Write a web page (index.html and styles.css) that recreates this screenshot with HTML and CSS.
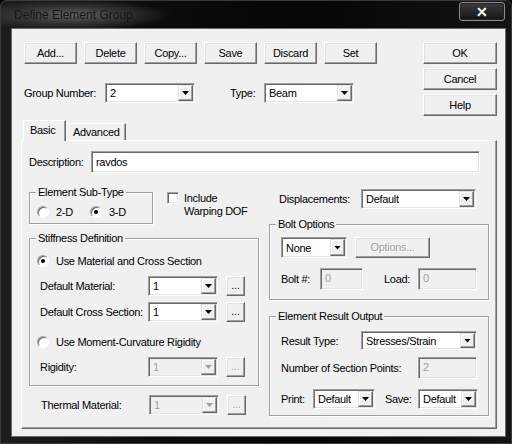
FILE: index.html
```html
<!DOCTYPE html>
<html>
<head>
<meta charset="utf-8">
<link rel="stylesheet" href="styles.css">
</head>
<body>
<div class="window">
  <div class="titlebar">
    <span class="title">Define Element Group</span>
    <div class="close">✕</div>
  </div>
  <div class="client">
    <div class="top">
      <div class="top-left">
        <div class="btnrow">
          <div class="btn">Add...</div>
          <div class="btn">Delete</div>
          <div class="btn">Copy...</div>
          <div class="btn">Save</div>
          <div class="btn">Discard</div>
          <div class="btn">Set</div>
        </div>
        <div class="grouprow">
          <span class="lbl w-gn">Group Number:</span>
          <div class="combo w90"><span class="val">2</span><span class="arrow"></span></div>
          <span class="lbl w-type">Type:</span>
          <div class="combo w90"><span class="val">Beam</span><span class="arrow"></span></div>
        </div>
      </div>
      <div class="side">
        <div class="btn wide">OK</div>
        <div class="btn wide">Cancel</div>
        <div class="btn wide">Help</div>
      </div>
    </div>
    <div class="tabs">
      <div class="tab active">Basic</div>
      <div class="tab">Advanced</div>
    </div>
    <div class="panel">
      <div class="row desc">
        <span class="lbl w-desc">Description:</span>
        <div class="input desc-in">ravdos</div>
      </div>
      <div class="cols">
        <div class="col-left">
          <div class="subrow">
            <div class="grp subtype">
              <div class="grp-title">Element Sub-Type</div>
              <div class="radios">
                <span class="opt w-2d"><span class="radio"></span>2-D</span>
                <span class="opt"><span class="radio on"></span>3-D</span>
              </div>
            </div>
            <div class="check"><span class="box"></span><span class="check-text">Include<br>Warping DOF</span></div>
          </div>
          <div class="grp stiff">
            <div class="grp-title">Stiffness Definition</div>
            <div class="opt first"><span class="radio on"></span>Use Material and Cross Section</div>
            <div class="row srow r-mat">
              <span class="lbl w-sl">Default Material:</span>
              <div class="combo w70"><span class="val">1</span><span class="arrow"></span></div>
              <div class="btn dots">...</div>
            </div>
            <div class="row srow r-cs">
              <span class="lbl w-sl">Default Cross Section:</span>
              <div class="combo w70"><span class="val">1</span><span class="arrow"></span></div>
              <div class="btn dots">...</div>
            </div>
            <div class="opt second"><span class="radio"></span>Use Moment-Curvature Rigidity</div>
            <div class="row srow r-rig">
              <span class="lbl w-sl">Rigidity:</span>
              <div class="combo w70 disabled"><span class="val">1</span><span class="arrow"></span></div>
              <div class="btn dots disabled">...</div>
            </div>
          </div>
          <div class="row thermal">
            <span class="lbl w-sl">Thermal Material:</span>
            <div class="combo w70 disabled"><span class="val">1</span><span class="arrow"></span></div>
            <div class="btn dots disabled">...</div>
          </div>
        </div>
        <div class="col-right">
          <div class="row disp">
            <span class="lbl w-disp">Displacements:</span>
            <div class="combo w115"><span class="val">Default</span><span class="arrow"></span></div>
          </div>
          <div class="grp bolt">
            <div class="grp-title">Bolt Options</div>
            <div class="row b1">
              <div class="combo w66 h21"><span class="val">None</span><span class="arrow"></span></div>
              <div class="btn opts disabled">Options...</div>
            </div>
            <div class="row b2">
              <span class="lbl w-bolt">Bolt #:</span>
              <div class="input disabled w43">0</div>
              <span class="lbl w-load">Load:</span>
              <div class="input disabled w59">0</div>
            </div>
          </div>
          <div class="grp ero">
            <div class="grp-title">Element Result Output</div>
            <div class="row e1">
              <span class="lbl w-rt">Result Type:</span>
              <div class="combo w116 h19"><span class="val">Stresses/Strain</span><span class="arrow"></span></div>
            </div>
            <div class="row e2">
              <span class="lbl w-nsp">Number of Section Points:</span>
              <div class="input disabled w59 h21">2</div>
            </div>
            <div class="row e3">
              <span class="lbl w-print">Print:</span>
              <div class="combo w62"><span class="val">Default</span><span class="arrow"></span></div>
              <span class="lbl w-save">Save:</span>
              <div class="combo w60"><span class="val">Default</span><span class="arrow"></span></div>
            </div>
          </div>
        </div>
      </div>
    </div>
  </div>
</div>
</body>
</html>
```

FILE: styles.css
```css
html, body {
  margin: 0;
  padding: 0;
  background: #000;
}

body {
  font-family: "Liberation Sans", Arial, sans-serif;
  font-size: 11px;
  letter-spacing: -0.3px;
  color: #000;
}

.window {
  width: 512px;
  height: 444px;
  box-sizing: border-box;
  background:
    radial-gradient(ellipse 100px 15px at 72px 15px, #606060 0%, rgba(70,70,70,0.6) 55%, rgba(0,0,0,0) 100%),
    linear-gradient(to right, #1e1e1e 0%, #0c0c0c 30%, #050505 60%, #141414 100%);
  overflow: hidden;
  border-radius: 6px 6px 0 0;
  box-shadow: inset 0 0 0 1px #3a3a3a;
}

.titlebar {
  height: 29px;
  display: flex;
  justify-content: space-between;
  align-items: flex-start;
}

.title {
  margin: 8px 0 0 14px;
  font-size: 12px;
  letter-spacing: 0;
  color: #161616;
}

.close {
  width: 46px;
  height: 19px;
  margin: 2px 7px 0 0;
  box-sizing: border-box;
  border: 1px solid #8c8c8c;
  border-radius: 3px;
  background: linear-gradient(#3c3c3c, #141414);
  box-shadow: inset 0 0 0 1px #222;
  color: #fff;
  font-size: 14px;
  font-weight: bold;
  letter-spacing: 0;
  display: flex;
  align-items: center;
  justify-content: center;
}

.client {
  margin-left: 12px;
  width: 493px;
  height: 407px;
  background: #f0f0f0;
  box-shadow: 0 0 0 1px #6a6a6a;
}

.top {
  height: 91px;
  display: flex;
  justify-content: space-between;
}

.top-left {
  padding: 13px 0 0 12px;
}

.btnrow {
  display: flex;
  gap: 7px;
}

.btn {
  width: 53px;
  height: 22px;
  box-sizing: border-box;
  border: 1px solid;
  border-color: #fff #696969 #696969 #fff;
  box-shadow: inset -1px -1px 0 #a0a0a0, inset 1px 1px 0 #e3e3e3;
  background: #f0f0f0;
  display: flex;
  align-items: center;
  justify-content: center;
  padding-bottom: 1px;
}

.btn.wide { width: 74px; }

.btn.disabled {
  color: #a0a0a0;
  text-shadow: 1px 1px 0 #fff;
}

.grouprow {
  display: flex;
  align-items: center;
  margin-top: 19px;
  height: 20px;
}

.side {
  padding: 13px 8px 0 0;
  display: flex;
  flex-direction: column;
  gap: 4px;
}

.lbl { flex: none; white-space: nowrap; }
.w-gn { width: 81px; }
.w-type { width: 34px; margin-left: 35px; }
.w-desc { width: 62px; }
.w-sl { width: 108px; }
.w-disp { width: 82px; }
.w-bolt { width: 39px; }
.w-load { width: 34px; margin-left: 21px; }
.w-rt { width: 80px; }
.w-nsp { width: 137px; }
.w-print { width: 32px; }
.w-save { width: 33px; margin-left: 10px; }

/* combo box */
.combo {
  flex: none;
  height: 20px;
  box-sizing: border-box;
  border: 1px solid;
  border-color: #a0a0a0 #fff #fff #a0a0a0;
  box-shadow: inset 1px 1px 0 #696969, inset -1px -1px 0 #e3e3e3;
  background: #fff;
  padding: 1px;
  display: flex;
  align-items: stretch;
}
.combo .val {
  flex: 1;
  padding-left: 3px;
  display: flex;
  align-items: center;
  white-space: nowrap;
  overflow: hidden;
}
.combo .arrow {
  width: 15px;
  flex: none;
  box-sizing: border-box;
  border: 1px solid;
  border-color: #e3e3e3 #696969 #696969 #e3e3e3;
  box-shadow: inset -1px -1px 0 #a0a0a0, inset 1px 1px 0 #fff;
  background: #f0f0f0;
  display: flex;
  align-items: center;
  justify-content: center;
}
.combo .arrow::after {
  content: "";
  width: 7px;
  height: 4px;
  background: #000;
  clip-path: polygon(0 0, 100% 0, 50% 100%);
}
.combo.disabled { background: #f0f0f0; }
.combo.disabled .val { color: #a0a0a0; }
.combo.disabled .arrow::after { background: #a0a0a0; }

.w90 { width: 90px; }
.w70 { width: 70px; }
.w115 { width: 115px; }
.w116 { width: 116px; }
.w66 { width: 66px; }
.w62 { width: 62px; }
.w60 { width: 60px; }
.w43 { width: 43px; }
.w59 { width: 59px; }
.h21 { height: 21px; }
.h19 { height: 19px; }

/* text input */
.input {
  flex: none;
  height: 22px;
  box-sizing: border-box;
  border: 1px solid;
  border-color: #a0a0a0 #fff #fff #a0a0a0;
  box-shadow: inset 1px 1px 0 #696969, inset -1px -1px 0 #e3e3e3;
  background: #fff;
  padding: 2px 3px 0 4px;
  line-height: 15px;
}
.input.disabled {
  background: #f0f0f0;
  color: #a0a0a0;
}

/* tabs */
.tabs {
  height: 20px;
  margin-left: 11px;
  display: flex;
  align-items: flex-end;
  position: relative;
  z-index: 1;
}
.tab {
  height: 17px;
  box-sizing: border-box;
  border: 1px solid;
  border-bottom: none;
  border-color: #fff #696969 transparent #fff;
  box-shadow: inset -1px 0 0 #a0a0a0;
  background: #f0f0f0;
  padding: 0 5px 0 6px;
  display: flex;
  align-items: center;
}
.tab.active {
  height: 21px;
  margin-bottom: -1px;
  width: 43px;
  padding: 0 0 3px 6px;
}

.panel {
  margin-left: 9px;
  width: 476px;
  height: 289px;
  box-sizing: border-box;
  border: 1px solid;
  border-color: #fff #696969 #696969 #fff;
  box-shadow: inset -1px -1px 0 #a0a0a0;
  padding: 10px 0 0 7px;
}

.row {
  display: flex;
  align-items: center;
}
.desc { height: 22px; }
.desc-in { width: 389px; padding-top: 3px; }

.cols {
  display: flex;
  margin-top: 13px;
}
.col-left { width: 229px; margin-right: 11px; }
.col-right { width: 220px; }

.subrow { display: flex; align-items: flex-start; }

/* group boxes */
.grp {
  box-sizing: border-box;
  border: 1px solid #a0a0a0;
  box-shadow: inset 1px 1px 0 #fff, 1px 1px 0 #fff;
}
.grp-title {
  width: fit-content;
  margin: -7px 0 0 6px;
  padding: 0 2px;
  line-height: 12px;
  height: 12px;
  background: #f0f0f0;
  white-space: nowrap;
}

.subtype { width: 124px; height: 32px; margin-top: 6px; }
.radios {
  display: flex;
  margin: 7px 0 0 7px;
  height: 13px;
  align-items: center;
}
.opt {
  display: flex;
  align-items: center;
  height: 13px;
  white-space: nowrap;
}
.w-2d { width: 53px; }
.radio {
  width: 12px;
  height: 12px;
  flex: none;
  box-sizing: border-box;
  border-radius: 50%;
  border: 1px solid;
  border-color: #a0a0a0 #fff #fff #a0a0a0;
  box-shadow: inset 1px 1px 0 #696969;
  background: #fff;
  margin-right: 7px;
  display: flex;
  align-items: center;
  justify-content: center;
}
.radio.on::after {
  content: "";
  width: 4px;
  height: 4px;
  border-radius: 50%;
  background: #000;
}

.check {
  display: flex;
  align-items: flex-start;
  margin: 6px 0 0 14px;
}
.check .box {
  width: 12px;
  height: 12px;
  flex: none;
  box-sizing: border-box;
  border: 1px solid;
  border-color: #a0a0a0 #fff #fff #a0a0a0;
  box-shadow: inset 1px 1px 0 #696969, inset -1px -1px 0 #e3e3e3;
  background: #fff;
  margin-right: 5px;
}
.check-text { line-height: 13px; }

.stiff { width: 230px; height: 148px; margin-top: 14px; }
.stiff .opt { margin-left: 7px; }
.stiff .opt.first { margin-top: 10px; }
.stiff .opt.second { margin-top: 13px; }
.srow { padding-left: 10px; }
.r-mat { margin-top: 9px; }
.r-cs { margin-top: 6px; }
.r-rig { margin-top: 9px; }
.btn.dots {
  width: 19px;
  height: 20px;
  margin-left: 8px;
  align-items: flex-end;
  padding-bottom: 4px;
  font-size: 10px;
  letter-spacing: 0;
}

.thermal { margin-top: 9px; padding-left: 12px; }

.disp { margin-top: 3px; padding-left: 10px; height: 20px; }
.bolt { width: 220px; height: 76px; margin-top: 15px; }
.b1 { margin: 7px 0 0 11px; }
.btn.opts { width: 75px; height: 21px; margin-left: 8px; }
.b2 { margin: 10px 0 0 11px; }

.ero { width: 220px; height: 100px; margin-top: 16px; }
.e1 { margin: 9px 0 0 11px; }
.e2 { margin: 7px 0 0 11px; }
.e3 { margin: 10px 0 0 11px; }
```
